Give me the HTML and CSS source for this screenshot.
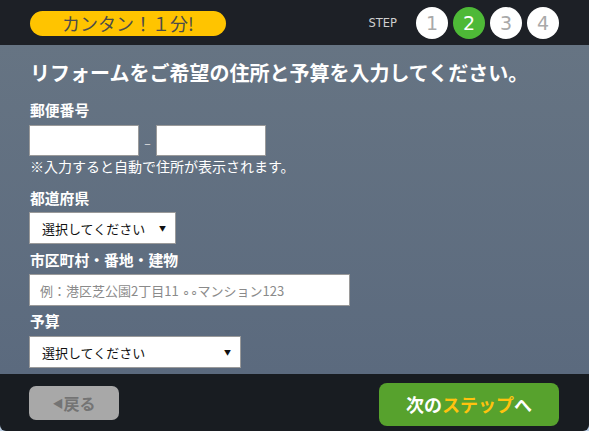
FILE: index.html
```html
<!DOCTYPE html>
<html lang="ja">
<head>
<meta charset="utf-8">
<link rel="stylesheet" href="styles.css">
</head>
<body>
<div class="frame">
  <header class="head">
    <div class="badge">カンタン！１分!</div>
    <div class="steps">
      <span class="step-label">STEP</span>
      <span class="circle">1</span>
      <span class="circle active">2</span>
      <span class="circle">3</span>
      <span class="circle">4</span>
    </div>
  </header>
  <main class="body">
    <h1 class="title">リフォームをご希望の住所と予算を入力してください。</h1>
    <div class="label l-zip">郵便番号</div>
    <div class="zip-row">
      <input class="field zip" type="text">
      <span class="dash">–</span>
      <input class="field zip" type="text">
    </div>
    <p class="note">※入力すると自動で住所が表示されます。</p>
    <div class="label l-pref">都道府県</div>
    <div class="select s-pref"><span>選択してください</span><span class="arrow">▼</span></div>
    <div class="label l-addr">市区町村・番地・建物</div>
    <input class="field addr" type="text" placeholder="例：港区芝公園2丁目11 ∘∘マンション123">
    <div class="label l-budget">予算</div>
    <div class="select s-budget"><span>選択してください</span><span class="arrow">▼</span></div>
  </main>
  <footer class="foot">
    <button class="back"><span class="tri">◀</span>戻る</button>
    <button class="next">次の<span class="hl">ステップ</span>へ</button>
  </footer>
</div>
</body>
</html>
```
FILE: styles.css
```css
* { box-sizing: border-box; }
html, body { margin: 0; padding: 0; }
body {
  background: #b9cbe0;
  font-family: "Noto Sans CJK JP", "Noto Sans", sans-serif;
  width: 589px;
  height: 431px;
  overflow: hidden;
}
.frame {
  width: 589px;
  height: 431px;
  display: flex;
  flex-direction: column;
  border-radius: 0 0 6px 6px;
  overflow: hidden;
}
.head {
  height: 45px;
  background: #1d2026;
  display: flex;
  align-items: center;
  justify-content: space-between;
  padding: 0 30px 0 30px;
}
.badge {
  width: 196px;
  height: 25px;
  border-radius: 13px;
  background: #ffc400;
  color: #4b4b4b;
  font-size: 18px;
  line-height: 25px;
  text-align: center;
  margin-top: 1px;
}
.steps {
  display: flex;
  align-items: center;
  gap: 5px;
}
.step-label {
  color: #d0d0d0;
  font-family: "DejaVu Sans", sans-serif;
  font-size: 11.5px;
  margin-right: 14px;
}
.circle {
  width: 32px;
  height: 32px;
  border-radius: 50%;
  background: #fff;
  color: #a9a9a9;
  font-family: "DejaVu Sans", sans-serif;
  font-size: 19px;
  line-height: 32px;
  text-align: center;
}
.circle.active {
  background: #4eb937;
  color: #fff;
}
.body {
  height: 329px;
  background: linear-gradient(#667483, #5b6a7e);
  padding: 14px 0 0 29px;
  color: #fff;
}
.title {
  margin: 0 0 0 1px;
  font-size: 20px;
  line-height: 28px;
  font-weight: bold;
}
.label {
  font-size: 14.8px;
  line-height: 20px;
  font-weight: bold;
  margin-left: 1px;
}
.l-zip { margin-top: 13px; margin-bottom: 5px; }
.l-pref { margin-top: 12px; margin-bottom: 4px; }
.l-addr { margin-top: 6px; margin-bottom: 4px; }
.l-budget { margin-top: 5px; margin-bottom: 5px; }
.zip-row {
  display: flex;
  align-items: center;
  height: 31px;
}
.field {
  display: block;
  height: 31px;
  border: 1px solid #9a9a9a;
  background: #fff;
  margin: 0;
  padding: 0 10px;
  font-family: inherit;
  font-size: 13px;
  outline: none;
  border-radius: 0;
}
.zip { width: 110px; }
.dash {
  width: 17px;
  text-align: center;
  font-size: 12px;
  color: #e8e8e8;
  padding-top: 4px;
}
.note {
  margin: 0 0 0 1px;
  font-size: 14px;
  line-height: 20px;
}
.addr {
  width: 321px;
  height: 32px;
}
.addr::placeholder { color: #8a8a8a; }
.select {
  height: 32px;
  border: 1px solid #9a9a9a;
  background: #fff;
  color: #111;
  font-size: 13px;
  display: flex;
  align-items: center;
  justify-content: space-between;
  padding: 0 9px 0 12px;
}
.s-pref { width: 147px; }
.s-budget { width: 212px; }
.arrow {
  font-size: 7px;
  color: #111;
}
.foot {
  flex: 1;
  background: #181c21;
  display: flex;
  align-items: center;
  justify-content: space-between;
  padding: 0 30px 0 29px;
}
.back {
  width: 90px;
  height: 34px;
  border: none;
  border-radius: 7px;
  background: #a8a8a8;
  color: #747474;
  font-family: inherit;
  font-size: 16px;
  font-weight: bold;
  padding: 0;
  margin-top: 1px;
}
.tri { font-size: 11px; vertical-align: 2px; }
.next {
  width: 180px;
  height: 43px;
  border: none;
  border-radius: 8px;
  background: #57a22d;
  color: #fff;
  font-family: inherit;
  font-size: 18px;
  font-weight: bold;
  padding: 0;
  margin-top: 3px;
}
.hl { color: #ffc20e; }
```
